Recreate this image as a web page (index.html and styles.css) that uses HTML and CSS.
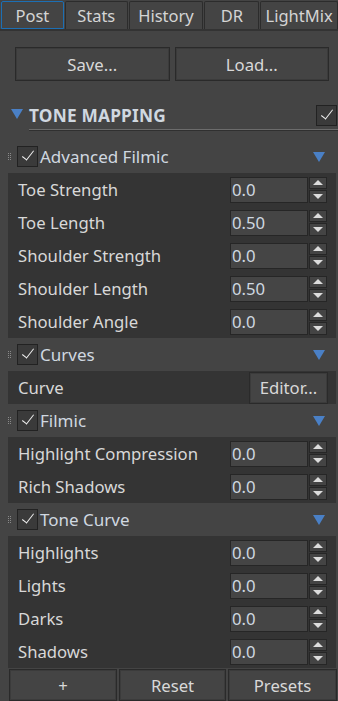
FILE: index.html
```html
<!DOCTYPE html>
<html lang="en">
<head>
    <meta charset="UTF-8">
    <meta name="viewport" content="width=device-width, initial-scale=1.0">
    <title>Post - Tone Mapping</title>
    <link rel="stylesheet" href="styles.css">
</head>
<body>

<div class="tabs">
    <div class="tab active">Post</div>
    <div class="tab">Stats</div>
    <div class="tab">History</div>
    <div class="tab">DR</div>
    <div class="tab">LightMix</div>
</div>

<div class="toolbar">
    <button class="btn">Save...</button>
    <button class="btn">Load...</button>
</div>

<div class="section-head">
    <span class="tri"></span>
    <div class="section-title">
        <span>TONE MAPPING</span>
        <span class="check"></span>
    </div>
</div>

<div class="groups">
    <div class="group-head">
        <span class="grip"></span>
        <span class="check"></span>
        <span class="group-title">Advanced Filmic</span>
        <span class="tri"></span>
    </div>
    <div class="panel">
        <div class="row"><span class="label">Toe Strength</span><div class="spin"><input value="0.0"><div class="arrows"><span class="up"></span><span class="down"></span></div></div></div>
        <div class="row"><span class="label">Toe Length</span><div class="spin"><input value="0.50"><div class="arrows"><span class="up"></span><span class="down"></span></div></div></div>
        <div class="row"><span class="label">Shoulder Strength</span><div class="spin"><input value="0.0"><div class="arrows"><span class="up"></span><span class="down"></span></div></div></div>
        <div class="row"><span class="label">Shoulder Length</span><div class="spin"><input value="0.50"><div class="arrows"><span class="up"></span><span class="down"></span></div></div></div>
        <div class="row"><span class="label">Shoulder Angle</span><div class="spin"><input value="0.0"><div class="arrows"><span class="up"></span><span class="down"></span></div></div></div>
    </div>

    <div class="group-head">
        <span class="grip"></span>
        <span class="check"></span>
        <span class="group-title">Curves</span>
        <span class="tri"></span>
    </div>
    <div class="panel">
        <div class="row"><span class="label">Curve</span><button class="btn editor">Editor...</button></div>
    </div>

    <div class="group-head">
        <span class="grip"></span>
        <span class="check"></span>
        <span class="group-title">Filmic</span>
        <span class="tri"></span>
    </div>
    <div class="panel">
        <div class="row"><span class="label">Highlight Compression</span><div class="spin"><input value="0.0"><div class="arrows"><span class="up"></span><span class="down"></span></div></div></div>
        <div class="row"><span class="label">Rich Shadows</span><div class="spin"><input value="0.0"><div class="arrows"><span class="up"></span><span class="down"></span></div></div></div>
    </div>

    <div class="group-head">
        <span class="grip"></span>
        <span class="check"></span>
        <span class="group-title">Tone Curve</span>
        <span class="tri"></span>
    </div>
    <div class="panel">
        <div class="row"><span class="label">Highlights</span><div class="spin"><input value="0.0"><div class="arrows"><span class="up"></span><span class="down"></span></div></div></div>
        <div class="row"><span class="label">Lights</span><div class="spin"><input value="0.0"><div class="arrows"><span class="up"></span><span class="down"></span></div></div></div>
        <div class="row"><span class="label">Darks</span><div class="spin"><input value="0.0"><div class="arrows"><span class="up"></span><span class="down"></span></div></div></div>
        <div class="row"><span class="label">Shadows</span><div class="spin"><input value="0.0"><div class="arrows"><span class="up"></span><span class="down"></span></div></div></div>
    </div>
</div>

<div class="footer">
    <button class="btn">+</button>
    <button class="btn">Reset</button>
    <button class="btn">Presets</button>
</div>

</body>
</html>
```

FILE: styles.css
```css
body { margin: 0; background-color: #444444; color: #d8d8d8; font-family: "Noto Sans", "Open Sans", sans-serif; font-size: 16.7px; overflow: hidden; }

/* tabs */
.tabs { display: flex; height: 28px; padding: 1px 0 0 1px; border-bottom: 2px solid #333333; }
.tab { box-sizing: border-box; height: 28px; border: 1px solid #2c2c2c; border-bottom: none; border-radius: 2px 2px 0 0; display: flex; align-items: center; justify-content: center; font-size: 16.5px; color: #d4d4d4; margin-right: 1px; }
.tab:nth-child(1) { width: 63px; }
.tab:nth-child(2) { width: 63px; }
.tab:nth-child(3) { width: 75px; }
.tab:nth-child(4) { width: 55px; }
.tab:nth-child(5) { width: 78px; margin-right: 0; }
.tab.active { border: 1px solid #1c6fb4; }

/* buttons */
.btn { box-sizing: border-box; background-color: #444444; border: 1px solid #2a2a2a; box-shadow: inset 0 0 0 1px #3b3b3b; color: #d8d8d8; font-family: inherit; font-size: 16.7px; padding: 0; cursor: pointer; }
.toolbar { display: flex; gap: 5px; padding: 16px 9px 0 15px; }
.toolbar .btn { width: 155px; height: 34px; }

/* section header */
.section-head { display: flex; align-items: flex-end; margin-top: 22px; }
.section-head > .tri { margin: 0 6px 11px 11px; }
.section-title { flex: 1; display: flex; align-items: center; justify-content: space-between; height: 25px; padding-bottom: 1px; border-bottom: 1px solid #6c6c6c; box-shadow: 0 1px 0 #303030; font-weight: bold; font-size: 17.3px; color: #d0d8e0; letter-spacing: 0.2px; }
.section-title .check { margin-right: 1px; width: 21px; height: 21px; }

.tri { width: 0; height: 0; border-left: 6px solid transparent; border-right: 6px solid transparent; border-top: 10px solid #4a80c6; }

.check { box-sizing: border-box; width: 21px; height: 21px; background-color: #3a3a3a; border: 1px solid #222222; position: relative; flex: none; }
.check::after { content: ""; position: absolute; left: 7px; top: 1px; width: 5px; height: 11px; border: solid #f0f0f0; border-width: 0 1.3px 1.3px 0; transform: rotate(38deg); }

/* groups */
.groups { margin: 10px 2px 0 8px; }
.group-head { display: flex; align-items: center; height: 33px; }
.grip { width: 3px; height: 7px; margin: 0 6px 0 0; position: relative; flex: none; }
.grip::before { content: ""; position: absolute; left: 0; top: 0; width: 1px; height: 1px; background: #8a8a8a; box-shadow: 2px 0 #8a8a8a, 0 2px #8a8a8a, 2px 2px #8a8a8a, 0 4px #8a8a8a, 2px 4px #8a8a8a, 0 6px #8a8a8a, 2px 6px #8a8a8a; }
.group-title { flex: 1; margin-left: 2px; font-size: 17px; color: #d0d8e0; }
.group-head .tri { margin-right: 11px; }

.panel { background-color: #343434; }
.row { display: flex; align-items: center; justify-content: space-between; height: 33px; padding: 0 9px 0 10px; }
.label { color: #d8d8d8; }
.spin { display: flex; gap: 1px; height: 26px; flex: none; }
.spin input { box-sizing: border-box; width: 78px; height: 26px; background-color: #454545; border: 1px solid #262626; color: #cfd8e0; font-family: inherit; font-size: 16.7px; padding: 0 0 0 1px; outline: none; }
.arrows { display: flex; flex-direction: column; gap: 1px; width: 18px; }
.arrows span { flex: 1; box-sizing: border-box; background-color: #444444; border: 1px solid #262626; display: flex; align-items: center; justify-content: center; }
.arrows .up::before { content: ""; border-left: 5px solid transparent; border-right: 5px solid transparent; border-bottom: 5px solid #dcdcdc; }
.arrows .down::before { content: ""; border-left: 5px solid transparent; border-right: 5px solid transparent; border-top: 5px solid #dcdcdc; }
.editor { width: 79px; height: 32px; margin-right: -1px; }

/* footer */
.footer { display: flex; gap: 2px; margin: 1px 1px 0 9px; }
.footer .btn { height: 32px; flex: none; }
.footer .btn:nth-child(1) { width: 108px; }
.footer .btn:nth-child(2) { width: 107px; }
.footer .btn:nth-child(3) { width: 109px; }
```
